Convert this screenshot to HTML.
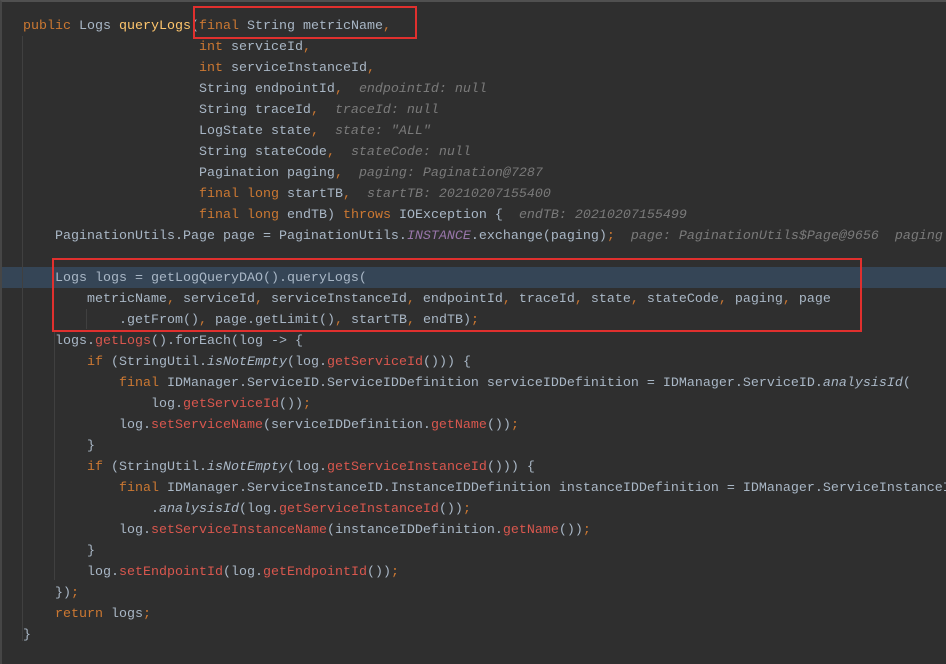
<!DOCTYPE html>
<html><head><meta charset="utf-8"><style>
html,body{margin:0;padding:0}
body{width:946px;height:664px;background:#2f2f2f;overflow:hidden;position:relative;font-family:"Liberation Mono",monospace;font-size:13.33px;color:#a9b7c6}
.frame{position:absolute;left:0;top:0;width:944px;height:662px;border-top:2px solid #505050;border-left:2px solid #464646}
.c{position:absolute;left:0;top:2px;width:946px;height:662px}
.l{position:absolute;left:23px;height:21px;line-height:21px;white-space:pre}
.k{color:#cc7832}.m{color:#ffc66d}.h{color:#7a7a7a;font-style:italic}.r{color:#d9574e}.i{font-style:italic}.p{color:#9876aa;font-style:italic}
.hl{position:absolute;left:2px;top:267px;width:944px;height:21px;background:#354556}
.box{position:absolute;border:2px solid #e0302e}
.g{position:absolute;width:1px;background:#404040}
</style></head><body>
<div class="frame"></div>
<div class="hl"></div>
<div class="g" style="left:22px;top:36px;height:605px"></div>
<div class="g" style="left:54px;top:330px;height:250px"></div>
<div class="g" style="left:86px;top:309px;height:20px"></div>
<div class="c">
<div class="l" style="top:14px"><span class="k">public</span> Logs <span class="m">queryLogs</span>(<span class="k">final</span> String metricName<span class="k">,</span></div>
<div class="l" style="top:35px">                      <span class="k">int</span> serviceId<span class="k">,</span></div>
<div class="l" style="top:56px">                      <span class="k">int</span> serviceInstanceId<span class="k">,</span></div>
<div class="l" style="top:77px">                      String endpointId<span class="k">,</span>  <span class="h">endpointId: null</span></div>
<div class="l" style="top:98px">                      String traceId<span class="k">,</span>  <span class="h">traceId: null</span></div>
<div class="l" style="top:119px">                      LogState state<span class="k">,</span>  <span class="h">state: "ALL"</span></div>
<div class="l" style="top:140px">                      String stateCode<span class="k">,</span>  <span class="h">stateCode: null</span></div>
<div class="l" style="top:161px">                      Pagination paging<span class="k">,</span>  <span class="h">paging: Pagination@7287</span></div>
<div class="l" style="top:182px">                      <span class="k">final long</span> startTB<span class="k">,</span>  <span class="h">startTB: 20210207155400</span></div>
<div class="l" style="top:203px">                      <span class="k">final long</span> endTB) <span class="k">throws</span> IOException {  <span class="h">endTB: 20210207155499</span></div>
<div class="l" style="top:224px">    PaginationUtils.Page page = PaginationUtils.<span class="p">INSTANCE</span>.exchange(paging)<span class="k">;</span>  <span class="h">page: PaginationUtils$Page@9656  paging</span></div>
<div class="l" style="top:266px">    Logs logs = getLogQueryDAO().queryLogs(</div>
<div class="l" style="top:287px">        metricName<span class="k">,</span> serviceId<span class="k">,</span> serviceInstanceId<span class="k">,</span> endpointId<span class="k">,</span> traceId<span class="k">,</span> state<span class="k">,</span> stateCode<span class="k">,</span> paging<span class="k">,</span> page</div>
<div class="l" style="top:308px">            .getFrom()<span class="k">,</span> page.getLimit()<span class="k">,</span> startTB<span class="k">,</span> endTB)<span class="k">;</span></div>
<div class="l" style="top:329px">    logs.<span class="r">getLogs</span>().forEach(log -> {</div>
<div class="l" style="top:350px">        <span class="k">if</span> (StringUtil.<span class="i">isNotEmpty</span>(log.<span class="r">getServiceId</span>())) {</div>
<div class="l" style="top:371px">            <span class="k">final</span> IDManager.ServiceID.ServiceIDDefinition serviceIDDefinition = IDManager.ServiceID.<span class="i">analysisId</span>(</div>
<div class="l" style="top:392px">                log.<span class="r">getServiceId</span>())<span class="k">;</span></div>
<div class="l" style="top:413px">            log.<span class="r">setServiceName</span>(serviceIDDefinition.<span class="r">getName</span>())<span class="k">;</span></div>
<div class="l" style="top:434px">        }</div>
<div class="l" style="top:455px">        <span class="k">if</span> (StringUtil.<span class="i">isNotEmpty</span>(log.<span class="r">getServiceInstanceId</span>())) {</div>
<div class="l" style="top:476px">            <span class="k">final</span> IDManager.ServiceInstanceID.InstanceIDDefinition instanceIDDefinition = IDManager.ServiceInstanceID</div>
<div class="l" style="top:497px">                .<span class="i">analysisId</span>(log.<span class="r">getServiceInstanceId</span>())<span class="k">;</span></div>
<div class="l" style="top:518px">            log.<span class="r">setServiceInstanceName</span>(instanceIDDefinition.<span class="r">getName</span>())<span class="k">;</span></div>
<div class="l" style="top:539px">        }</div>
<div class="l" style="top:560px">        log.<span class="r">setEndpointId</span>(log.<span class="r">getEndpointId</span>())<span class="k">;</span></div>
<div class="l" style="top:581px">    })<span class="k">;</span></div>
<div class="l" style="top:602px">    <span class="k">return</span> logs<span class="k">;</span></div>
<div class="l" style="top:623px">}</div>
</div>
<div class="box" style="left:193px;top:6px;width:220px;height:29px"></div>
<div class="box" style="left:52px;top:258px;width:806px;height:70px"></div>
</body></html>
